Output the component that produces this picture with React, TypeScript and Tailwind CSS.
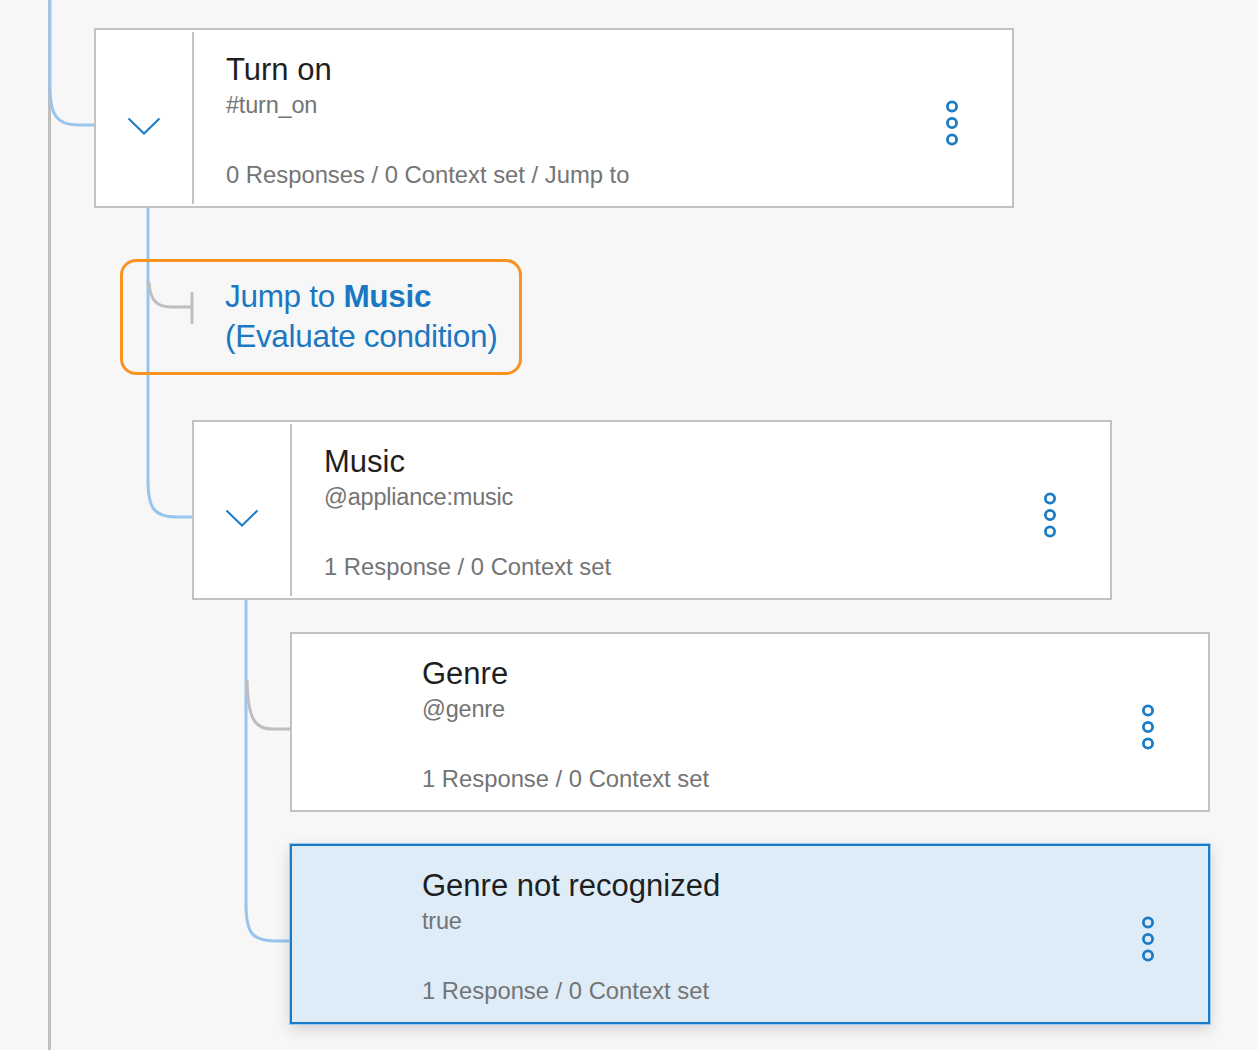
import type { ReactNode } from 'react';

type NodeCardProps = {
  title: string;
  condition: string;
  summary: string;
  expandable?: boolean;
  selected?: boolean;
  className?: string;
};

function Kebab() {
  return (
    <svg width="16" height="46" viewBox="0 0 16 46" className="block">
      <circle cx="8" cy="6.5" r="4.6" fill="none" stroke="#1a7cc5" strokeWidth="2.8" />
      <circle cx="8" cy="23" r="4.6" fill="none" stroke="#1a7cc5" strokeWidth="2.8" />
      <circle cx="8" cy="39.5" r="4.6" fill="none" stroke="#1a7cc5" strokeWidth="2.8" />
    </svg>
  );
}

function Chevron() {
  return (
    <svg width="34" height="18" viewBox="0 0 34 18" className="block">
      <path d="M1.5 1.5 L17 16.5 L32.5 1.5" fill="none" stroke="#1a7cc5" strokeWidth="2" />
    </svg>
  );
}

function NodeCard({ title, condition, summary, expandable, selected, className }: NodeCardProps) {
  return (
    <div
      className={
        'relative flex w-[920px] h-[180px] border-2 ' +
        (selected
          ? 'bg-[#deecf8] border-[#1b7bc6] ring-1 ring-[#9fcbf1] shadow-[0_5px_14px_rgba(0,0,0,0.16)] '
          : 'bg-white border-[#c2c2c2] ') +
        (className ?? '')
      }
    >
      {/* toggle column */}
      <div className="w-[96px] shrink-0 flex items-center justify-center pt-[16px]">
        {expandable && <Chevron />}
      </div>
      {expandable ? <div className="w-[2px] my-[2px] bg-[#c2c2c2]" /> : <div className="w-[2px]" />}

      <div className="flex-1 flex flex-col pl-[32px] pt-[22px] pb-[16px]">
        <div className="text-[31px] leading-[36px] text-[#1f1f1f]">{title}</div>
        <div className="mt-[2px] text-[23.5px] leading-[30px] text-[#747474] tracking-[-0.2px]">{condition}</div>
        <div className="mt-auto text-[23.8px] leading-[30px] text-[#747474]">{summary}</div>
      </div>

      <div className="w-[112px] shrink-0 flex items-center justify-center pt-[10px] pr-[8px]">
        <Kebab />
      </div>
    </div>
  );
}

function JumpBox({ children }: { children: ReactNode }) {
  return (
    <div className="relative ml-[120px] mt-[51px] w-[402px] h-[116px] rounded-[16px] border-[3px] border-[#f7931e] pl-[102px] pt-[14px]">
      {children}
    </div>
  );
}

function Connectors() {
  const blue = '#97c5f0';
  const gray = '#bebebe';
  return (
    <svg className="absolute inset-0 pointer-events-none" width="1258" height="1050" viewBox="0 0 1258 1050">
      {/* trunk */}
      <path d="M49.5 0 V1050" stroke={gray} strokeWidth="3" fill="none" />
      <path d="M50 0 V86 C50 114 56 125 78 125 H96" stroke={blue} strokeWidth="3" fill="none" />

      {/* turn on -> music */}
      <path d="M148 207 V480 C148 508 154 517 176 517 H194" stroke={blue} strokeWidth="3" fill="none" />
      {/* jump stub */}
      <path d="M149 282 C150 300 156 307 172 307 H192" stroke={gray} strokeWidth="3" fill="none" />
      <path d="M192 292 V324" stroke={gray} strokeWidth="3" fill="none" />

      {/* music -> children */}
      <path d="M246 599 V904 C246 932 252 941 274 941 H292" stroke={blue} strokeWidth="3" fill="none" />
      <path d="M247 680 C248 718 254 729 272 729 H292" stroke={gray} strokeWidth="3" fill="none" />
    </svg>
  );
}

export default function App() {
  return (
    <div className="relative w-full h-[1050px] overflow-hidden bg-[#f7f7f7] pt-[28px] font-['Liberation_Sans',Arial,sans-serif]">
      <Connectors />

      <NodeCard
        className="ml-[94px]"
        title="Turn on"
        condition="#turn_on"
        summary="0 Responses / 0 Context set / Jump to"
        expandable
      />

      <JumpBox>
        <div className="text-[31.5px] leading-[40px] text-[#1a78c2] tracking-[-0.3px]">
          Jump to <span className="font-bold">Music</span>
        </div>
        <div className="text-[31.5px] leading-[40px] text-[#1a78c2] tracking-[-0.3px]">(Evaluate condition)</div>
      </JumpBox>

      <NodeCard
        className="ml-[192px] mt-[45px]"
        title="Music"
        condition="@appliance:music"
        summary="1 Response / 0 Context set"
        expandable
      />

      <NodeCard
        className="ml-[290px] mt-[32px]"
        title="Genre"
        condition="@genre"
        summary="1 Response / 0 Context set"
      />

      <NodeCard
        className="ml-[290px] mt-[32px]"
        title="Genre not recognized"
        condition="true"
        summary="1 Response / 0 Context set"
        selected
      />
    </div>
  );
}
